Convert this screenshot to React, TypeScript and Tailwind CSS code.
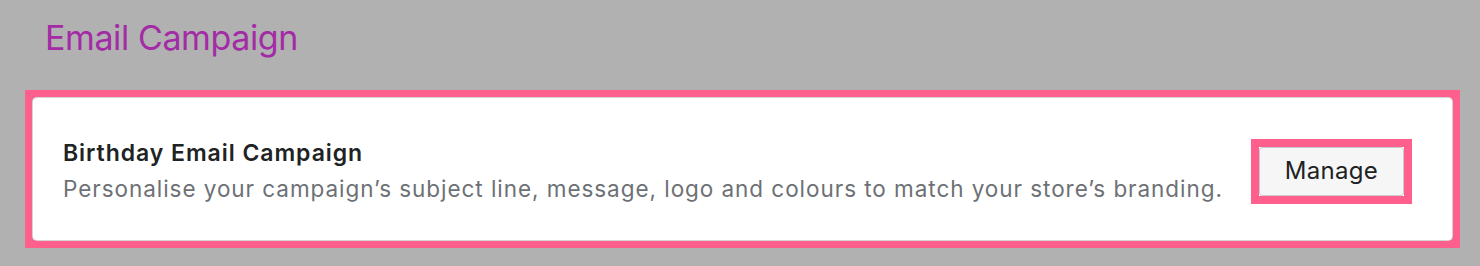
import React from 'react';

const App: React.FC = () => {
  return (
    <div
      className="min-h-[266px] w-full bg-[#b1b1b1] pl-[25px] pr-[20px] pt-[16px]"
      style={{ fontFamily: 'Inter, "Noto Sans", sans-serif' }}
    >
      <h1 className="pl-[20px] text-[34px] leading-[44px] font-normal tracking-[-0.4px] text-[#a32ca6]">
        Email Campaign
      </h1>

      {/* highlighted card */}
      <div className="mt-[30px] border-[8px] border-[#ff5f8d]">
        <div className="flex h-[142px] items-center justify-between rounded-[4px] bg-white pl-[30px] pr-[40px] shadow-[0_0_0_1px_#d4d4d4]">
          <div className="mt-[4px]">
            <h2 className="text-[23px] leading-[28px] font-semibold tracking-[0.95px] text-[#202223]">
              Birthday Email Campaign
            </h2>
            <p className="mt-[7px] text-[22.5px] leading-[30px] tracking-[0.95px] text-[#6d7175]">
              Personalise your campaign’s subject line, message, logo and colours to match your store’s branding.
            </p>
          </div>
          <div className="mt-[4px] border-[8px] border-[#ff5f8d]">
            <button className="flex h-[49px] w-[145px] items-center justify-center rounded-[3px] border border-[#c9cccf] bg-[#f6f6f7] text-[24px] tracking-[0.3px] text-[#202223]">
              Manage
            </button>
          </div>
        </div>
      </div>
    </div>
  );
};

export default App;
